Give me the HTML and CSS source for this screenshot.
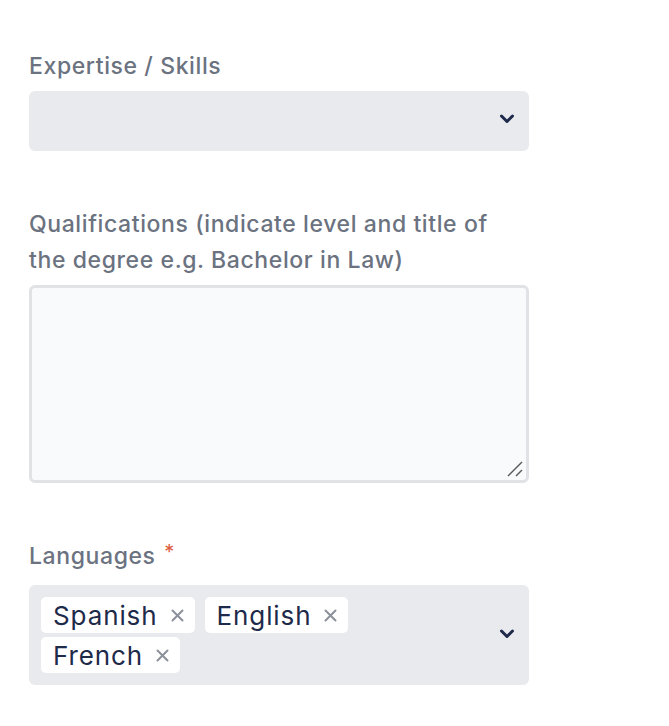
FILE: index.html
```html
<!DOCTYPE html>
<html>
<head>
<meta charset="utf-8">
<link rel="stylesheet" href="styles.css">
</head>
<body>
<div class="form">
  <div class="field">
    <label class="label">Expertise / Skills</label>
    <div class="select">
      <svg class="chevron" width="16" height="10" viewBox="0 0 16 10"><polyline points="2.5,2 8,7.5 13.5,2" fill="none" stroke="#1e2a4a" stroke-width="3" stroke-linecap="round" stroke-linejoin="round"/></svg>
    </div>
  </div>
  <div class="field">
    <label class="label">Qualifications (indicate level and title of the degree e.g. Bachelor in Law)</label>
    <div class="textarea-wrap">
      <textarea class="textarea"></textarea>
      <svg class="grip" width="18" height="18" viewBox="0 0 18 18"><line x1="2" y1="16" x2="16" y2="2" stroke="#5a5a5a" stroke-width="1.5"/><line x1="10" y1="16" x2="16" y2="10" stroke="#5a5a5a" stroke-width="1.5"/></svg>
    </div>
  </div>
  <div class="field">
    <label class="label label-req">Languages <span class="req">*</span></label>
    <div class="multi">
      <div class="tags">
        <span class="tag">Spanish<svg class="x" width="13" height="13" viewBox="0 0 13 13"><path d="M1.5 1.5L11.5 11.5M11.5 1.5L1.5 11.5" stroke="#8b909b" stroke-width="2" stroke-linecap="round"/></svg></span>
        <span class="tag">English<svg class="x" width="13" height="13" viewBox="0 0 13 13"><path d="M1.5 1.5L11.5 11.5M11.5 1.5L1.5 11.5" stroke="#8b909b" stroke-width="2" stroke-linecap="round"/></svg></span>
        <span class="tag">French<svg class="x" width="13" height="13" viewBox="0 0 13 13"><path d="M1.5 1.5L11.5 11.5M11.5 1.5L1.5 11.5" stroke="#8b909b" stroke-width="2" stroke-linecap="round"/></svg></span>
      </div>
      <svg class="chevron" width="16" height="10" viewBox="0 0 16 10"><polyline points="2.5,2 8,7.5 13.5,2" fill="none" stroke="#1e2a4a" stroke-width="3" stroke-linecap="round" stroke-linejoin="round"/></svg>
    </div>
  </div>
</div>
</body>
</html>
```
FILE: styles.css
```css
body {
  margin: 0;
  background: #ffffff;
  font-family: Inter, "Noto Sans", sans-serif;
}
.form {
  padding: 48px 0 0 29px;
  width: 500px;
}
.field {
  margin-bottom: 55px;
}
.label {
  display: block;
  font-size: 23px;
  line-height: 36px;
  font-weight: 500;
  letter-spacing: 0.6px;
  color: #6b7280;
  margin-bottom: 7px;
}
.label-req {
  margin-bottom: 11px;
}
.req {
  color: #dc5a3c;
  font-weight: 400;
  font-size: 20px;
  line-height: 0;
  position: relative;
  top: -5px;
  margin-left: 2px;
}
.select {
  height: 60px;
  background: #e9eaee;
  border-radius: 6px;
  display: flex;
  align-items: center;
  justify-content: flex-end;
  padding-right: 14px;
  box-sizing: border-box;
}
.chevron {
  display: block;
  margin-top: -4px;
}
.textarea-wrap {
  position: relative;
  width: 500px;
}
.textarea {
  display: block;
  width: 500px;
  height: 198px;
  box-sizing: border-box;
  border: 3px solid #e1e2e6;
  border-radius: 6px;
  background: #f9fafb;
  margin: 0;
  padding: 8px;
  font-family: inherit;
  font-size: 20px;
  resize: none;
  outline: none;
}
.grip {
  position: absolute;
  right: 5px;
  bottom: 5px;
}
.multi {
  min-height: 100px;
  background: #e9eaee;
  border-radius: 6px;
  display: flex;
  align-items: center;
  padding: 12px 14px 12px 12px;
  box-sizing: border-box;
}
.tags {
  flex: 1;
  display: flex;
  flex-wrap: wrap;
  gap: 4px 10px;
  max-width: 320px;
}
.tag {
  display: inline-flex;
  align-items: center;
  height: 36px;
  padding: 0 11px 0 12px;
  background: #ffffff;
  border-radius: 5px;
  font-size: 26px;
  letter-spacing: 0.9px;
  color: #1e2a4a;
  box-sizing: border-box;
}
.x {
  display: block;
  margin-left: 13px;
}
.multi .chevron {
  margin-left: auto;
  margin-top: -2px;
}
```
